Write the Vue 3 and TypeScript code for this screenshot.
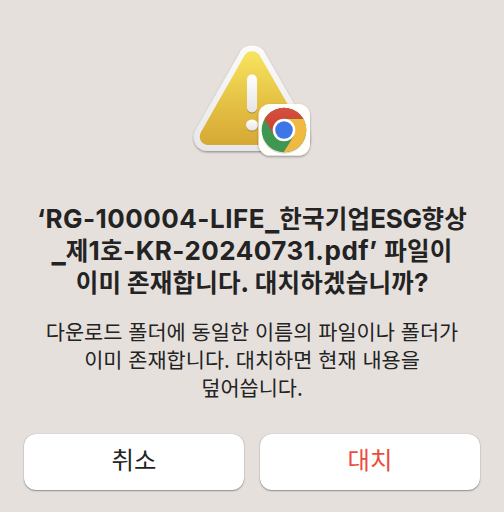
<script setup lang="ts">
interface Run {
  text: string
  kind: 'ko' | 'latin' | 'code' | 'underscore'
}

const titleLines: Run[][] = [
  [
    { text: '‘RG-100004-LIFE', kind: 'code' },
    { text: '_', kind: 'underscore' },
    { text: '한국기업', kind: 'ko' },
    { text: 'ESG', kind: 'latin' },
    { text: '향상', kind: 'ko' },
  ],
  [
    { text: '_', kind: 'underscore' },
    { text: '제', kind: 'ko' },
    { text: '1', kind: 'code' },
    { text: '호', kind: 'ko' },
    { text: '-KR-20240731.pdf’ ', kind: 'code' },
    { text: '파일이', kind: 'ko' },
  ],
  [
    { text: '이미 존재합니다. 대치하겠습니까', kind: 'ko' },
    { text: '?', kind: 'latin' },
  ],
]

const messageLines: string[] = [
  '다운로드 폴더에 동일한 이름의 파일이나 폴더가',
  '이미 존재합니다. 대치하면 현재 내용을',
  '덮어씁니다.',
]
</script>

<template>
  <main class="dialog" role="alertdialog" aria-labelledby="title" aria-describedby="message">
    <svg class="icon" viewBox="0 0 140 130" aria-hidden="true">
      <defs>
        <linearGradient id="rim" x1="0" y1="0" x2="0" y2="1">
          <stop offset="0" stop-color="#fbfbfb" />
          <stop offset="1" stop-color="#e7e7e9" />
        </linearGradient>
        <linearGradient id="gold" x1="0" y1="0" x2="0" y2="1">
          <stop offset="0" stop-color="#f8e45f" />
          <stop offset="0.5" stop-color="#e6c446" />
          <stop offset="1" stop-color="#d6a835" />
        </linearGradient>
        <linearGradient id="mark" x1="0" y1="0" x2="0" y2="1">
          <stop offset="0" stop-color="#ffffff" />
          <stop offset="1" stop-color="#e5e5e5" />
        </linearGradient>
        <linearGradient id="red" x1="0" y1="0" x2="0" y2="1">
          <stop offset="0" stop-color="#d95040" />
          <stop offset="1" stop-color="#c5402f" />
        </linearGradient>
        <filter id="shadow" x="-20%" y="-20%" width="140%" height="140%">
          <feDropShadow dx="0" dy="1.2" stdDeviation="1.2" flood-color="#000" flood-opacity="0.38" />
        </filter>
        <filter id="markShadow" x="-50%" y="-20%" width="200%" height="150%">
          <feDropShadow dx="0" dy="1" stdDeviation="0.7" flood-color="#765400" flood-opacity="0.6" />
        </filter>
        <clipPath id="disc"><circle cx="100" cy="94" r="22.3" /></clipPath>
      </defs>
      <path
        filter="url(#shadow)"
        fill="url(#rim)"
        d="M56 16.2C60 7.3 76 7.3 80.5 16.2L124.5 93C130 103 124 115 112.500 115H24C12.500 115 6.500 104 11.500 94Z"
      />
      <path
        fill="url(#gold)"
        d="M60.500 19.500C63.500 13.800 72.500 13.800 75.700 19.500L119 95C122.500 101 119 109 111 109H25C16.500 109 14 101.500 17 96Z"
      />
      <g filter="url(#markShadow)" fill="url(#mark)">
        <rect x="63" y="38.5" width="10" height="38" rx="4.8" />
        <ellipse cx="68" cy="89" rx="6" ry="5.5" />
      </g>
      <rect filter="url(#shadow)" x="74.5" y="68" width="51.5" height="51.5" rx="11.5" fill="#fffefb" />
      <circle cx="100" cy="95.5" r="22.3" fill="#4b4b3b" opacity="0.2" />
      <g clip-path="url(#disc)">
        <rect x="77" y="71" width="46" height="46" fill="#3f9651" />
        <path fill="#f0b93f" d="M100 83H124V118H98.5L110 99.8Z" />
        <path fill="url(#red)" d="M76 69H124V82.7H100L90.3 99.8L79.5 81Z" />
      </g>
      <circle cx="100" cy="94" r="11.3" fill="#fff" />
      <circle cx="100" cy="94" r="8.8" fill="#3e76e7" />
    </svg>

    <h1 id="title" class="title">
      <span v-for="(line, i) in titleLines" :key="i" class="line">
        <span v-for="(run, j) in line" :key="j" :class="run.kind">{{ run.text }}</span>
      </span>
    </h1>

    <p id="message" class="message">
      <span v-for="line in messageLines" :key="line" class="line">{{ line }}</span>
    </p>

    <div class="actions">
      <button type="button" class="button">취소</button>
      <button type="button" class="button destructive">대치</button>
    </div>
  </main>
</template>

<style>
body {
  background: #e6e0dd;
}
</style>

<style scoped>
.dialog {
  box-sizing: border-box;
  width: 504px;
  height: 512px;
  padding: 36px 24px 22px;
  display: flex;
  flex-direction: column;
  background: #e6e0dd;
  color: #232323;
  font-family: Inter, 'Noto Sans CJK KR', sans-serif;
}

.icon {
  display: block;
  flex: none;
  width: 140px;
  height: 130px;
  margin-left: 160px;
}

.title {
  margin: 37px 0 0;
  font-size: 26px;
  font-weight: 700;
  line-height: 32px;
  text-align: center;
}

.line {
  display: block;
  white-space: pre;
}

.title .line {
  height: 32px;
}

.title .ko {
  font-family: 'Noto Sans CJK KR', sans-serif;
  font-size: 24.5px;
  line-height: 1;
  letter-spacing: 0.2px;
}

.title .latin {
  letter-spacing: -0.3px;
}

.title .code {
  letter-spacing: 0.47px;
}

.title .underscore {
  font-size: 30px;
  line-height: 1;
  vertical-align: -2px;
}

.message {
  margin: 18px 0 0;
  font-family: 'Noto Sans CJK KR', sans-serif;
  font-size: 20.8px;
  line-height: 28px;
  word-spacing: 1.3px;
  text-align: center;
}

.actions {
  display: grid;
  grid-template-columns: 1fr 1fr;
  gap: 16px;
  margin-top: auto;
}

.button {
  height: 56px;
  padding: 0 0 5px;
  border: 0;
  border-radius: 12px;
  background: #fff;
  box-shadow: 0 0 1px rgba(0, 0, 0, 0.3), 0 1px 1.5px rgba(0, 0, 0, 0.35);
  color: #232323;
  font: 400 24.4px/1 'Noto Sans CJK KR', sans-serif;
}

.destructive {
  color: #eb4d3d;
}
</style>
